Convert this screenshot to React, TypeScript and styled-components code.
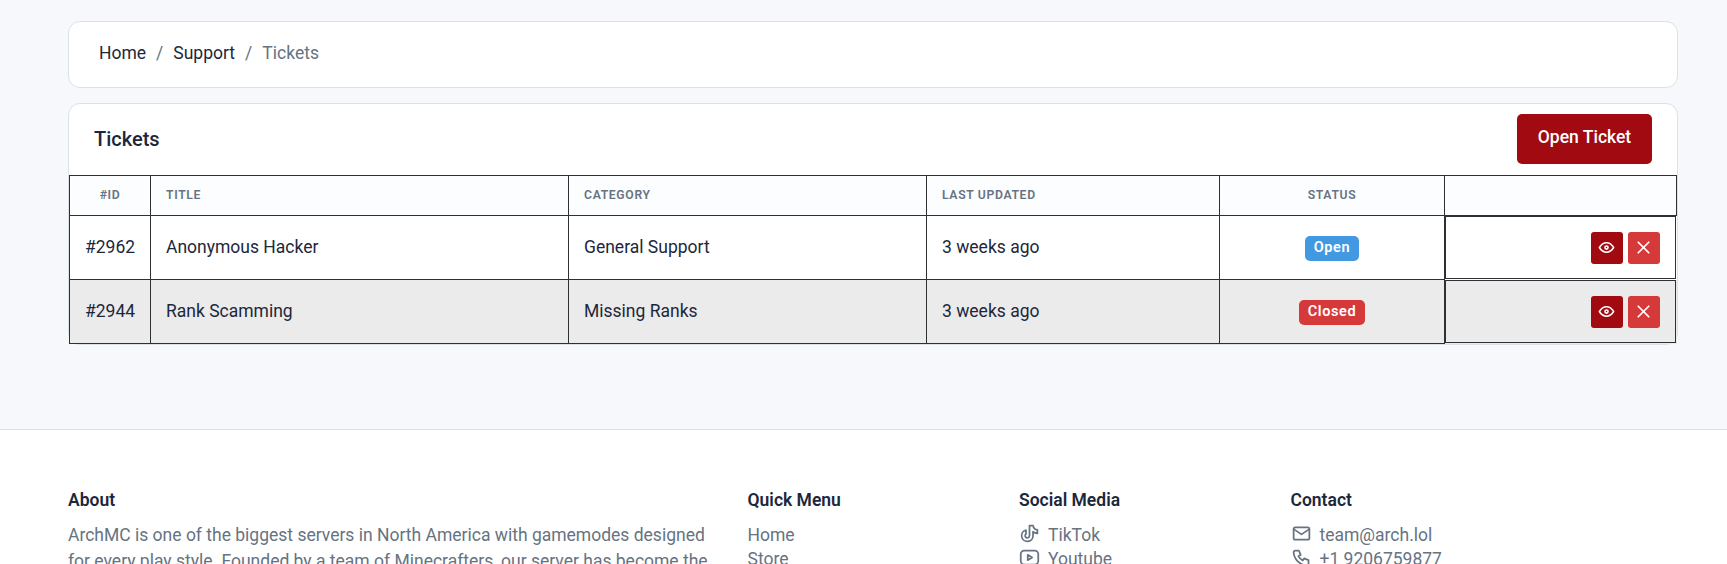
import React from 'react';
import styled, { createGlobalStyle } from 'styled-components';
import {
  TbBrandTiktok,
  TbBrandYoutube,
  TbEye,
  TbMail,
  TbPhone,
  TbX
} from 'react-icons/tb';

const tickets = [
  { id: '#2962', title: 'Anonymous Hacker', category: 'General Support', updated: '3 weeks ago', status: 'Open' },
  { id: '#2944', title: 'Rank Scamming', category: 'Missing Ranks', updated: '3 weeks ago', status: 'Closed' }
];

export default function App() {
  return (
    <Page>
      <GlobalStyle />
      <Main>
        <BreadcrumbCard>
          <Crumb>Home</Crumb>
          <Separator>/</Separator>
          <Crumb>Support</Crumb>
          <Separator>/</Separator>
          <Crumb $active>Tickets</Crumb>
        </BreadcrumbCard>
        <TicketsCard>
          <CardHeader>
            <CardTitle>Tickets</CardTitle>
            <OpenButton>Open Ticket</OpenButton>
          </CardHeader>
          <Table>
            <colgroup>
              <col style={{ width: 81 }} />
              <col style={{ width: 418 }} />
              <col style={{ width: 358 }} />
              <col style={{ width: 293 }} />
              <col style={{ width: 225 }} />
              <col />
            </colgroup>
            <thead>
              <tr>
                <Th $center>#ID</Th>
                <Th>Title</Th>
                <Th>Category</Th>
                <Th>Last Updated</Th>
                <Th $center>Status</Th>
                <Th />
              </tr>
            </thead>
            <tbody>
              {tickets.map(ticket => (
                <Row key={ticket.id}>
                  <Td $center>{ticket.id}</Td>
                  <Td>{ticket.title}</Td>
                  <Td>{ticket.category}</Td>
                  <Td>{ticket.updated}</Td>
                  <StatusCell $center>
                    <Badge $closed={ticket.status === 'Closed'}>{ticket.status}</Badge>
                  </StatusCell>
                  <ActionCell>
                    <Actions>
                      <IconButton $tone="#a10a10" aria-label="View">
                        <TbEye size={19} />
                      </IconButton>
                      <IconButton $tone="#d63939" aria-label="Close">
                        <TbX size={21} />
                      </IconButton>
                    </Actions>
                  </ActionCell>
                </Row>
              ))}
            </tbody>
          </Table>
        </TicketsCard>
      </Main>
      <Footer>
        <FooterGrid>
          <section>
            <FooterTitle>About</FooterTitle>
            <AboutText>
              ArchMC is one of the biggest servers in North America with gamemodes designed
              for every play style. Founded by a team of Minecrafters, our server has become the
            </AboutText>
          </section>
          <section>
            <FooterTitle>Quick Menu</FooterTitle>
            <FooterList>
              <FooterItem>Home</FooterItem>
              <FooterItem>Store</FooterItem>
            </FooterList>
          </section>
          <section>
            <FooterTitle>Social Media</FooterTitle>
            <FooterList>
              <FooterItem><TbBrandTiktok size={21} />TikTok</FooterItem>
              <FooterItem><TbBrandYoutube size={21} />Youtube</FooterItem>
            </FooterList>
          </section>
          <section>
            <FooterTitle>Contact</FooterTitle>
            <FooterList>
              <FooterItem><TbMail size={21} />team@arch.lol</FooterItem>
              <FooterItem><TbPhone size={21} />+1 9206759877</FooterItem>
            </FooterList>
          </section>
        </FooterGrid>
      </Footer>
    </Page>
  );
}

const GlobalStyle = createGlobalStyle`
  html, body {
    margin: 0;
    height: 564px;
    overflow: hidden;
    background: #f6f8fb;
  }
  * {
    box-sizing: border-box;
  }
`;

const Page = styled.div`
  font-family: Roboto, "Liberation Sans", sans-serif;
  font-size: 17.5px;
  color: #1d273b;
`;

const Main = styled.main`
  display: flex;
  flex-direction: column;
  gap: 15px;
  height: 429px;
  padding: 21px 49px 0 68px;
`;

const Card = styled.div`
  background: #fff;
  border: 1px solid #dce1e7;
  border-radius: 12px;
`;

const BreadcrumbCard = styled(Card)`
  display: flex;
  align-items: center;
  gap: 10px;
  height: 67px;
  padding: 0 30px 4px;
`;

const Crumb = styled.span<{ $active?: boolean }>`
  color: ${props => (props.$active ? '#667382' : '#1d273b')};
`;

const Separator = styled.span`
  color: #667382;
`;

const TicketsCard = styled(Card)`
  align-self: stretch;
`;

const CardHeader = styled.div`
  display: flex;
  align-items: center;
  justify-content: space-between;
  height: 71px;
  padding: 0 25px;
`;

const CardTitle = styled.h3`
  margin: 0 0 2px;
  font-size: 20px;
  font-weight: 500;
`;

const OpenButton = styled.button`
  width: 135px;
  height: 50px;
  margin-top: -1px;
  padding: 0 0 4px;
  border: 0;
  border-radius: 5px;
  background: #a10a10;
  color: #fff;
  font: 500 17.5px Roboto, sans-serif;
`;

const Table = styled.table`
  width: 100%;
  table-layout: fixed;
  border-collapse: collapse;
`;

const Th = styled.th<{ $center?: boolean }>`
  height: 40px;
  padding: 0 15px 1px;
  border: 1px solid #2e3033;
  background: #fcfdfe;
  color: #667382;
  font-size: 12.2px;
  font-weight: 600;
  letter-spacing: 0.66px;
  text-transform: uppercase;
  text-align: ${props => (props.$center ? 'center' : 'left')};
`;

const Row = styled.tr`
  height: 64px;
  &:nth-child(even) {
    background: #ebebeb;
  }
`;

const Td = styled.td<{ $center?: boolean }>`
  padding: 0 15px 2px;
  border: 1px solid #2e3033;
  text-align: ${props => (props.$center ? 'center' : 'left')};
`;

const StatusCell = styled(Td)`
  padding: 2px 15px 0;
`;

const ActionCell = styled.td`
  padding: 0;
`;

const Actions = styled.div`
  display: flex;
  align-items: center;
  justify-content: flex-end;
  gap: 5px;
  height: 63px;
  margin-right: 1px;
  padding: 0 15px;
  border: 1px solid #2e3033;
`;

const IconButton = styled.button<{ $tone: string }>`
  display: flex;
  align-items: center;
  justify-content: center;
  width: 32px;
  height: 32px;
  padding: 0;
  border: 0;
  border-radius: 3px;
  background: ${props => props.$tone};
  color: #fff;
`;

const Badge = styled.span<{ $closed?: boolean }>`
  display: inline-block;
  padding: 4px 9px 5px;
  border-radius: 5px;
  background: ${props => (props.$closed ? '#d63939' : '#4299e1')};
  color: #fff;
  font-size: 14.5px;
  font-weight: 600;
  line-height: 16px;
  letter-spacing: 0.6px;
`;

const Footer = styled.footer`
  height: 135px;
  padding: 57px 49px 0 68px;
  background: #fff;
  border-top: 1px solid #dce1e7;
`;

const FooterGrid = styled.div`
  display: grid;
  grid-template-columns: 679.5px 271.5px 271.5px 1fr;
`;

const FooterTitle = styled.h4`
  margin: 0 0 9px;
  font-size: 17.5px;
  font-weight: 600;
  line-height: 26px;
`;

const AboutText = styled.p`
  margin: 0;
  width: 659px;
  color: #667382;
  font-size: 17.5px;
  line-height: 26px;
`;

const FooterList = styled.div`
  padding-top: 1px;
`;

const FooterItem = styled.div`
  display: flex;
  align-items: center;
  gap: 8px;
  height: 24px;
  color: #667382;

  svg {
    margin-top: -3px;
  }
`;
